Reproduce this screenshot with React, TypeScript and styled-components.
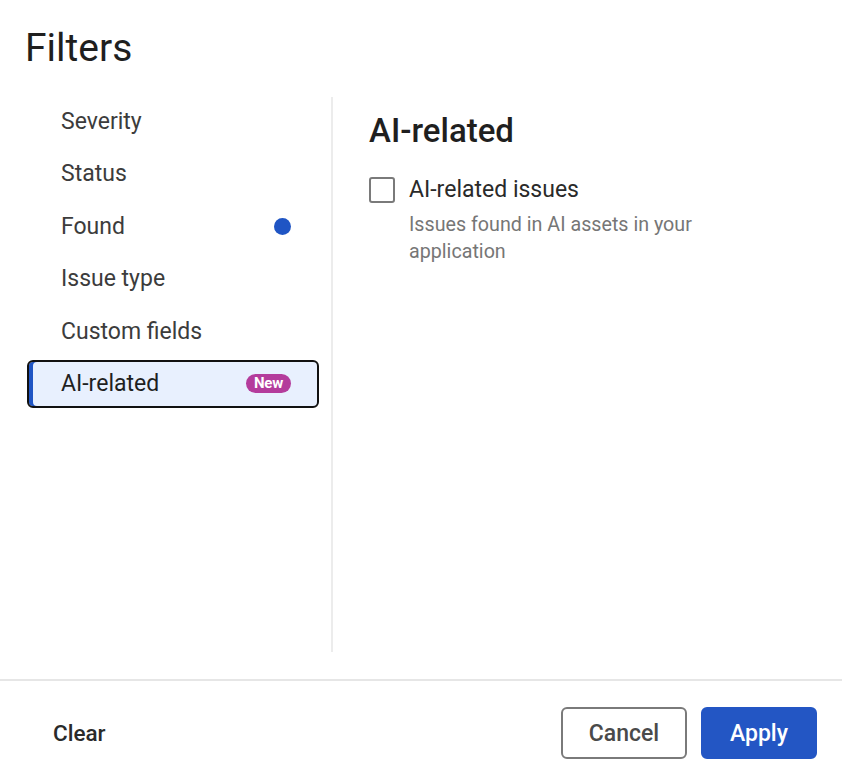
import React, { useState } from "react";
import styled, { createGlobalStyle } from "styled-components";

const GlobalStyle = createGlobalStyle`
  html, body {
    margin: 0;
    padding: 0;
    background: #ffffff;
    font-family: Roboto, "Liberation Sans", Arial, sans-serif;
    color: #202124;
  }
`;

const Dialog = styled.div`
  width: 842px;
  height: 782px;
  display: flex;
  flex-direction: column;
  background: #fff;
`;

const Header = styled.div`
  padding: 25px 25px 0;
  height: 97px;
  box-sizing: border-box;
`;

const Title = styled.h1`
  margin: 0;
  font-size: 39px;
  font-weight: 400;
  line-height: 46px;
  color: #1f1f1f;
`;

const Body = styled.div`
  display: flex;
  height: 555px;
  margin-bottom: 27px;
`;

const Sidebar = styled.nav`
  width: 333px;
  border-right: 2px solid #ececec;
  padding: 0 12px 0 27px;
  box-sizing: border-box;
  display: flex;
  flex-direction: column;
  gap: 4.6px;
`;

const NavItem = styled.button<{ $active?: boolean }>`
  all: unset;
  box-sizing: border-box;
  height: 48px;
  display: flex;
  align-items: center;
  justify-content: space-between;
  padding: 0 26px 0 32px;
  font-family: Roboto, "Liberation Sans", Arial, sans-serif;
  font-size: 23px;
  color: ${(p) => (p.$active ? "#1f1f1f" : "#3c3c3c")};
  border-radius: 6px;
  cursor: pointer;
  border: 2px solid ${(p) => (p.$active ? "#111" : "transparent")};
  background: ${(p) => (p.$active ? "#e8f0fe" : "transparent")};
  box-shadow: ${(p) => (p.$active ? "inset 4px 0 0 #1f55c4" : "none")};
`;

const Dot = styled.span`
  width: 17px;
  height: 17px;
  border-radius: 50%;
  background: #1f55c4;
`;

const Badge = styled.span`
  height: 19px;
  padding: 0 8px;
  border-radius: 10px;
  background: #b43c9c;
  color: #fff;
  font-size: 15px;
  font-weight: 700;
  line-height: 19px;
  letter-spacing: -0.2px;
`;

const Content = styled.section`
  flex: 1;
  padding: 14px 0 0 36px;
`;

const SectionTitle = styled.h2`
  margin: 0 0 25px;
  font-size: 33px;
  font-weight: 500;
  line-height: 40px;
  color: #1f1f1f;
`;

const Option = styled.label`
  display: grid;
  grid-template-columns: 26px 1fr;
  column-gap: 14px;
  cursor: pointer;
`;

const Box = styled.span`
  width: 26px;
  height: 26px;
  box-sizing: border-box;
  border: 2px solid #7a7a7a;
  border-radius: 3px;
  margin-top: 1px;
`;

const OptionLabel = styled.span`
  font-size: 23px;
  line-height: 28px;
  color: #2a2a2a;
`;

const OptionHint = styled.span`
  grid-column: 2;
  font-size: 19.7px;
  line-height: 27px;
  color: #767676;
  margin-top: 6.5px;
  max-width: 300px;
`;

const Footer = styled.div`
  flex: 1;
  border-top: 2px solid #e6e6e6;
  display: flex;
  align-items: center;
  justify-content: space-between;
  padding: 3px 25px 0 53px;
`;

const TextButton = styled.button`
  all: unset;
  font-family: Roboto, "Liberation Sans", Arial, sans-serif;
  font-size: 22.5px;
  font-weight: 500;
  color: #2a2a2a;
  cursor: pointer;
`;

const Actions = styled.div`
  display: flex;
  gap: 14px;
`;

const Button = styled.button<{ $primary?: boolean }>`
  box-sizing: border-box;
  height: 52px;
  width: ${(p) => (p.$primary ? "116px" : "126px")};
  border-radius: 6px;
  font-family: Roboto, "Liberation Sans", Arial, sans-serif;
  font-size: 23px;
  font-weight: 500;
  cursor: pointer;
  border: 2px solid ${(p) => (p.$primary ? "#2356c4" : "#7a7a7a")};
  background: ${(p) => (p.$primary ? "#2356c4" : "#fff")};
  color: ${(p) => (p.$primary ? "#fff" : "#4a4a4a")};
`;

const items = ["Severity", "Status", "Found", "Issue type", "Custom fields", "AI-related"];

export default function App() {
  const [active, setActive] = useState("AI-related");
  return (
    <>
      <GlobalStyle />
      <Dialog>
        <Header>
          <Title>Filters</Title>
        </Header>
        <Body>
          <Sidebar>
            {items.map((item) => (
              <NavItem key={item} $active={item === active} onClick={() => setActive(item)}>
                <span>{item}</span>
                {item === "Found" && <Dot />}
                {item === "AI-related" && <Badge>New</Badge>}
              </NavItem>
            ))}
          </Sidebar>
          <Content>
            <SectionTitle>AI-related</SectionTitle>
            <Option>
              <Box />
              <OptionLabel>AI-related issues</OptionLabel>
              <OptionHint>Issues found in AI assets in your application</OptionHint>
            </Option>
          </Content>
        </Body>
        <Footer>
          <TextButton>Clear</TextButton>
          <Actions>
            <Button>Cancel</Button>
            <Button $primary>Apply</Button>
          </Actions>
        </Footer>
      </Dialog>
    </>
  );
}
